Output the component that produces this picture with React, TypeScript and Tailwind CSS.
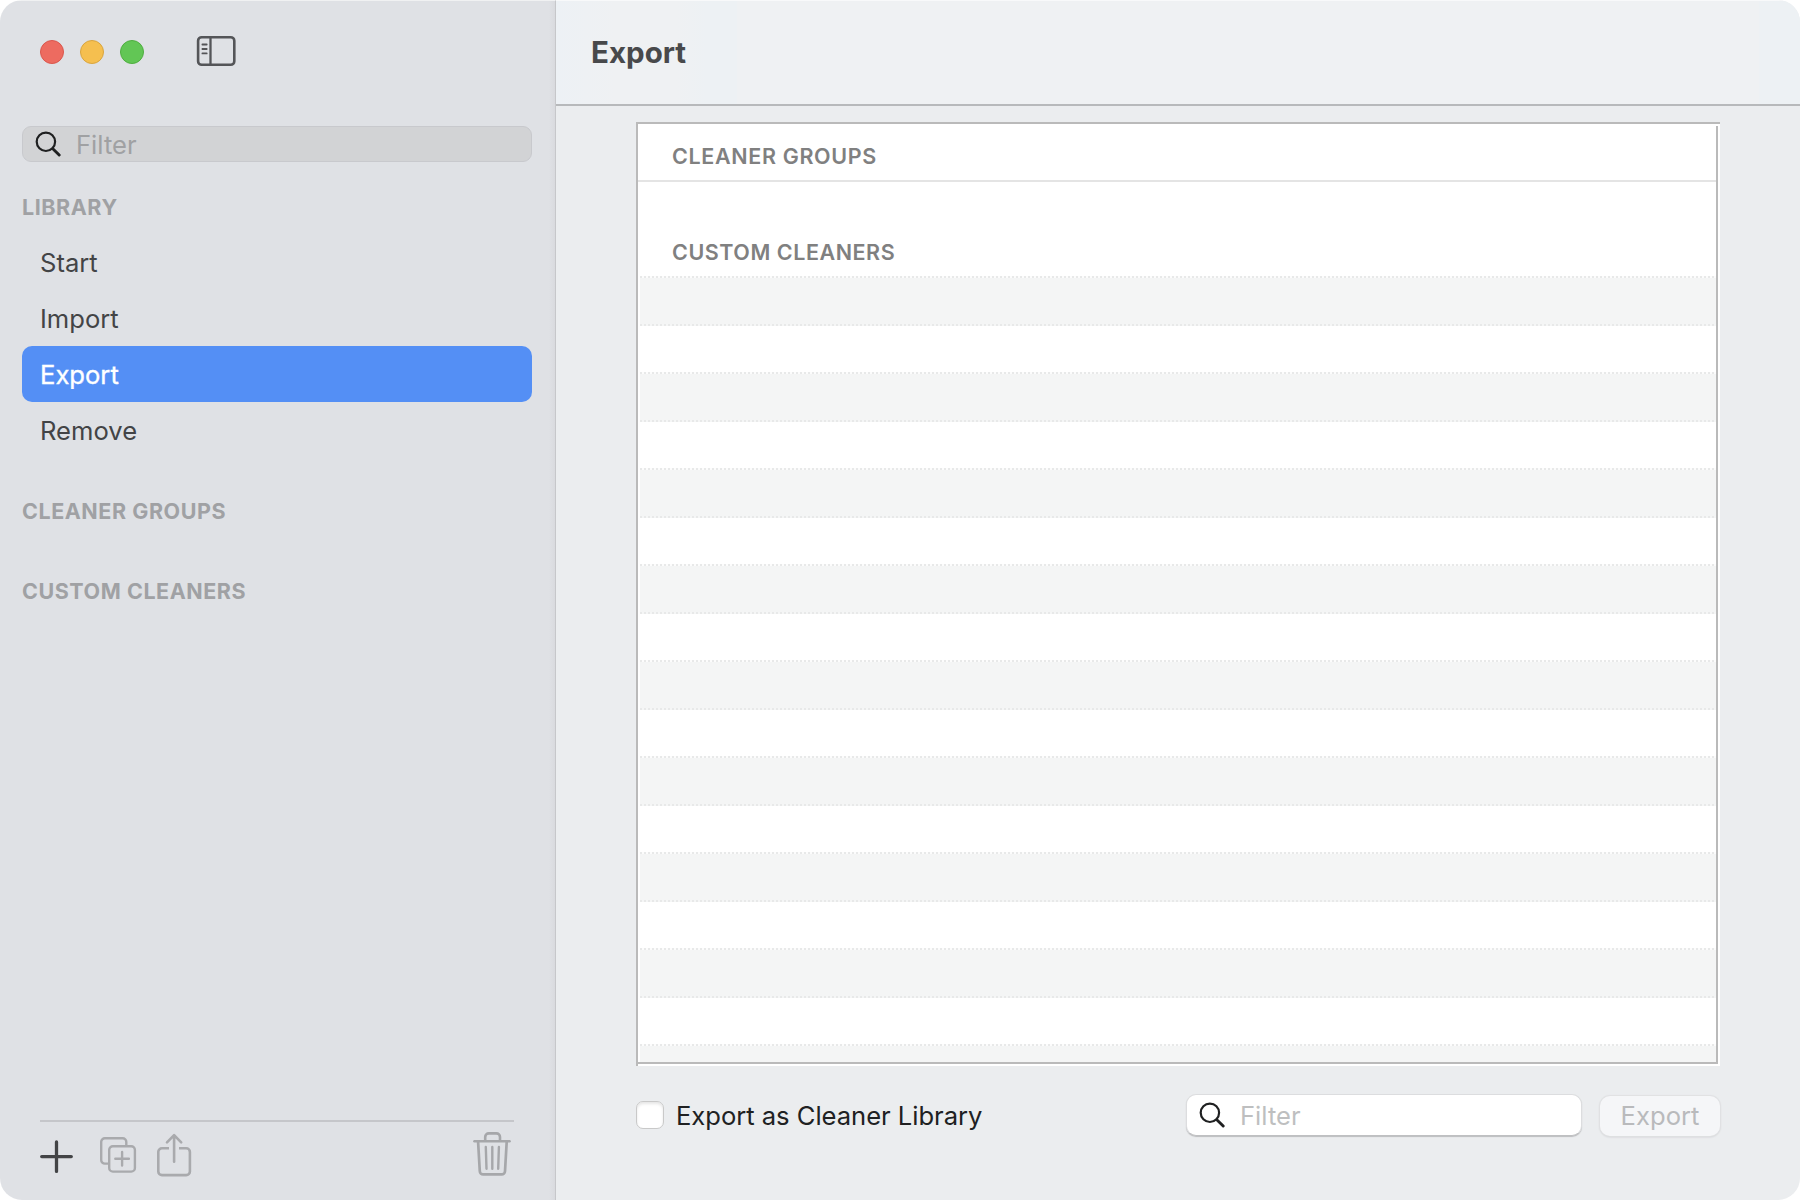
import type { ReactNode } from "react";

const libraryItems = ["Start", "Import", "Export", "Remove"];
const selected = "Export";
const listRows = Array.from({ length: 17 }, (_, i) => i);

function SearchIcon() {
  return (
    <svg width="26" height="26" viewBox="0 0 26 26" fill="none" stroke="#1f2021" className="shrink-0">
      <circle cx="10.9" cy="10.8" r="9.2" strokeWidth="2.2" />
      <path d="M17.8 17.7L24.2 24" strokeWidth="2.9" strokeLinecap="round" />
    </svg>
  );
}

function SidebarIcon() {
  return (
    <svg width="40" height="32" viewBox="0 0 40 32" fill="none" stroke="#545558">
      <rect x="2.1" y="2.2" width="36.2" height="27.6" rx="3.6" strokeWidth="2.6" />
      <path d="M14.5 2.2V29.8" strokeWidth="2.3" />
      <path d="M6.4 9.5H10.7M6.4 14H10.7M6.4 18.4H10.7" strokeWidth="1.8" strokeLinecap="round" />
    </svg>
  );
}

function PlusIcon() {
  return (
    <svg width="34" height="34" viewBox="0 0 34 34" fill="none" stroke="#434446" strokeWidth="3.3" strokeLinecap="round">
      <path d="M16.5 1.9V31.4M1.7 16.6H31.3" />
    </svg>
  );
}

function DuplicateIcon() {
  return (
    <svg width="38" height="38" viewBox="0 0 38 38" fill="none" stroke="#a9aaad" strokeWidth="2.4">
      <path d="M9 27.6H6A3.7 3.7 0 0 1 2.2 23.9V6A3.7 3.7 0 0 1 5.9 2.3H23.6A3.7 3.7 0 0 1 27.3 6V10.2" />
      <rect x="10.2" y="10.3" width="25.7" height="25.3" rx="3.7" />
      <path d="M23.1 15.9V29.5M16.3 22.7H29.9" strokeLinecap="round" />
    </svg>
  );
}

function ShareIcon() {
  return (
    <svg width="36" height="46" viewBox="0 0 36 46" fill="none" stroke="#a9aaad" strokeWidth="2.6">
      <path d="M13 15.3H6A3.7 3.7 0 0 0 2.3 19V38.4A3.7 3.7 0 0 0 6 42.1H30.2A3.7 3.7 0 0 0 33.9 38.4V19A3.7 3.7 0 0 0 30.2 15.3H23" />
      <path d="M18.1 28.8V2.6M11 9.4L18.1 2.2L25.2 9.4" strokeLinecap="round" strokeLinejoin="round" />
    </svg>
  );
}

function TrashIcon() {
  return (
    <svg width="38" height="46" viewBox="0 0 38 46" fill="none" stroke="#a6a7aa" strokeLinecap="round">
      <path d="M1.4 10.3H36.6" strokeWidth="2.4" />
      <path d="M12.2 9.8V6A3.6 3.6 0 0 1 15.8 2.4H23.4A3.6 3.6 0 0 1 27 6V9.8" strokeWidth="2.6" />
      <path d="M5.1 10.8L6.8 40.2A3.3 3.3 0 0 0 10.1 43.4H28.7A3.3 3.3 0 0 0 32 40.2L33.7 10.8" strokeWidth="2.7" />
      <path d="M12.8 16L13.5 37.7M19.3 16V37.7M25.9 16L25.2 37.7" strokeWidth="2.4" />
    </svg>
  );
}

function SidebarHeading({ children }: { children: ReactNode }) {
  return <h2 className="pl-[22px] text-[21.5px] leading-[54px] font-bold tracking-[0.55px] text-[#a0a1a4]">{children}</h2>;
}

export default function App() {
  return (
    <div className="flex h-[1200px] w-[1800px] overflow-hidden bg-white font-[Inter,'Liberation_Sans',sans-serif] text-[25.6px]">
      <div className="flex flex-1 overflow-hidden rounded-[22px]">
        <aside className="flex w-[556px] shrink-0 flex-col border-t border-r border-t-[#f0f1f2] border-r-[#c6c7ca] bg-[linear-gradient(90deg,#dfe1e5_549px,#d8d9dd_556px)]">
          <div className="flex h-[125px] items-start pt-[39px] pl-[40px]">
            <div className="flex gap-4">
              <span className="size-6 rounded-full border border-[#da574d] bg-[#ed6b60]" />
              <span className="size-6 rounded-full border border-[#d9a53f] bg-[#f5bf4f]" />
              <span className="size-6 rounded-full border border-[#4fae40] bg-[#62c655]" />
            </div>
            <div className="-mt-[5px] ml-[52px]">
              <SidebarIcon />
            </div>
          </div>

          <div className="mr-[23px] ml-[22px] flex h-9 items-center gap-[15px] rounded-[9px] border border-[#c8c9cd] bg-[#d2d3d5] pl-[12px] text-[#a0a1a3]">
            <SearchIcon />
            <span className="mt-[2px] leading-8">Filter</span>
          </div>

          <div className="mt-[18px]">
            <SidebarHeading>LIBRARY</SidebarHeading>
          </div>
          <ul className="mr-[23px] ml-[22px]">
            {libraryItems.map((item) => (
              <li
                key={item}
                className={
                  item === selected
                    ? "h-14 rounded-[10px] bg-[#548ff5] pt-[1px] pl-[18px] leading-[56px] text-white [-webkit-text-stroke:0.35px_white]"
                    : "h-14 pt-[1px] pl-[18px] leading-[56px] text-[#434446]"
                }
              >
                {item}
              </li>
            ))}
          </ul>
          <div className="mt-[26px] flex flex-col gap-[26px]">
            <SidebarHeading>CLEANER GROUPS</SidebarHeading>
            <SidebarHeading>CUSTOM CLEANERS</SidebarHeading>
          </div>

          <div className="mt-auto mr-[41px] ml-10 flex h-[80px] items-start border-t-2 border-[#c5c6ca]">
            <div className="mt-[18px]">
              <PlusIcon />
            </div>
            <div className="mt-[14px] ml-[25px]">
              <DuplicateIcon />
            </div>
            <div className="mt-[11px] ml-[19px]">
              <ShareIcon />
            </div>
            <div className="mt-[9px] mr-[3px] ml-auto">
              <TrashIcon />
            </div>
          </div>
        </aside>

        <main className="flex flex-1 flex-col bg-[#ebedef]">
          <header className="flex h-[106px] items-center border-t border-b-2 border-t-[#f8f9fa] border-b-[#b7b9bb] bg-[linear-gradient(90deg,#edf1f5_0,#eff1f3_60px,#eff1f3_120px,#edf1f4_150px,#edf1f4_181px,#eff1f3_181px,#eff1f3_1203px,#edf1f4_1203px)] pb-[2px] pl-[35px]">
            <h1 className="text-[29.5px] leading-9 font-bold text-[#48494b]">Export</h1>
          </header>

          <section className="mt-4 ml-20 flex h-[944px] w-[1084px] flex-col border-t-2 border-l-2 border-[#bababa] bg-white">
            <div className="flex flex-1 flex-col overflow-hidden pt-[2px] pr-[2px] pb-[2px]">
              <div className="flex flex-1 flex-col overflow-hidden border-r-2 border-b-2 border-[#bababa]">
                <div className="h-[56px] shrink-0 border-b-2 border-[#e4e4e4] pt-[3px] pl-[34px] text-[21.5px] leading-[54px] font-semibold tracking-[0.65px] text-[#808080]">
                  CLEANER GROUPS
                </div>
                <div className="h-[94px] shrink-0 pt-[42px] pl-[34px] text-[21.5px] leading-[56px] font-semibold tracking-[0.55px] text-[#808080]">
                  CUSTOM CLEANERS
                </div>
                {listRows.map((row) => (
                  <div key={row} className={row % 2 === 0 ? "ml-[2px] h-12 shrink-0 bg-[#f4f5f5]" : "ml-[2px] h-12 shrink-0 bg-white"}>
                    <div
                      className={
                        row % 2 === 0
                          ? "h-[2px] bg-[repeating-linear-gradient(90deg,#e8e9e9_0_2px,#fcfcfc_2px_4px)]"
                          : "h-[2px] bg-[repeating-linear-gradient(90deg,#e8e9e9_0_2px,#f5f6f6_2px_4px)]"
                      }
                    />
                  </div>
                ))}
              </div>
            </div>
          </section>

          <div className="mt-[27px] mr-20 ml-20 flex items-start">
            <label className="flex items-start">
              <span className="mt-[8px] size-7 rounded-[7px] border border-[#c9c9c9] bg-white shadow-[inset_0_2px_3px_#e6e6e6]" />
              <span className="mt-[3px] ml-[12px] leading-10 tracking-[-0.03px] text-[#202122]">Export as Cleaner Library</span>
            </label>
            <div className="mt-[1px] ml-auto flex h-[42px] w-[396px] items-center gap-[15px] rounded-[10px] border border-[#dcdddf] border-b-[#bfc0c2] bg-white pl-[12px] text-[#bebfc0] shadow-[0_1px_1px_#bcbdbf]">
              <SearchIcon />
              <span className="mt-[2px] leading-8">Filter</span>
            </div>
            <button className="mt-[3px] ml-[18px] h-[40px] w-[120px] rounded-[10px] bg-[#f5f6f8] leading-9 text-[#b9babc] shadow-[0_0_1px_1px_#e0e1e3,0_1px_2px_#c4c5c8]">
              Export
            </button>
          </div>
        </main>
      </div>
    </div>
  );
}
